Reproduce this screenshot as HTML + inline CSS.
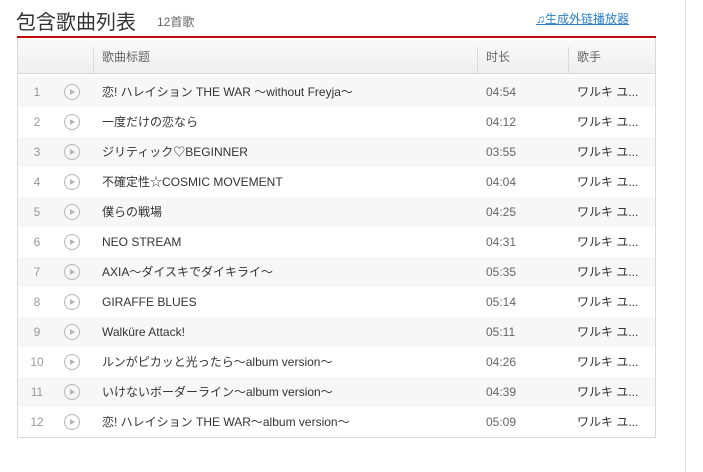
<!DOCTYPE html>
<html><head><meta charset="utf-8"><style>
body{margin:0;width:703px;height:472px;background:#fff;font-family:"Liberation Sans","Noto Sans CJK JP",sans-serif;position:relative;overflow:hidden}
.vline{position:absolute;left:685px;top:0;width:1px;height:472px;background:#e3e3e3}
.title{position:absolute;left:16px;top:6px;font-size:20px;color:#333}
.cnt{position:absolute;left:157px;top:13px;font-size:12px;color:#666}
.link{position:absolute;left:536px;top:10px;font-size:12px;color:#2a7fc6;text-decoration:underline}
.red{position:absolute;left:17px;top:36px;width:639px;height:2px;background:#c20c0c}
.tbl{position:absolute;left:17px;top:38px;width:637px;height:399px;border:1px solid #d9d9d9;border-top:none}
.hd{position:absolute;left:0;top:0;width:637px;height:35px;background:linear-gradient(#fafafa,#efefef);border-bottom:1px solid #d9d9d9;font-size:12px;color:#666;line-height:38px}
.hd span{position:absolute;top:0}
.sep{position:absolute;top:9px;width:1px;height:27px;background:#dadada}
.row{position:absolute;left:0;width:637px;height:30px;font-size:12px;color:#333;line-height:30px}
.row span{position:absolute;top:0;white-space:nowrap}
.row.o{background:#f7f7f7}
.row .n{left:0;width:38px;text-align:center;color:#999}
.row .p{left:46px;top:7px;width:14px;height:14px;border:1.5px solid #b5b5b5;border-radius:50%}
.row .p:after{content:"";position:absolute;left:5px;top:3.5px;border-left:5px solid #b5b5b5;border-top:3.5px solid transparent;border-bottom:3.5px solid transparent}
.row .t{left:84px}
.row .d{left:468px;color:#666}
.row .a{left:559px}
</style></head><body>
<div class="vline"></div>
<div class="title">包含歌曲列表</div>
<div class="cnt">12首歌</div>
<div class="link">♫生成外链播放器</div>
<div class="red"></div>
<div class="tbl">
<div class="hd"><span style="left:84px">歌曲标题</span><span style="left:468px">时长</span><span style="left:559px">歌手</span>
<div class="sep" style="left:75px"></div><div class="sep" style="left:459px"></div><div class="sep" style="left:550px"></div></div>
<div class="row o" style="top:39px"><span class="n">1</span><span class="p"></span><span class="t">恋! ハレイション THE WAR ～without Freyja～</span><span class="d">04:54</span><span class="a">ワルキ ユ...</span></div>
<div class="row" style="top:69px"><span class="n">2</span><span class="p"></span><span class="t">一度だけの恋なら</span><span class="d">04:12</span><span class="a">ワルキ ユ...</span></div>
<div class="row o" style="top:99px"><span class="n">3</span><span class="p"></span><span class="t">ジリティック♡BEGINNER</span><span class="d">03:55</span><span class="a">ワルキ ユ...</span></div>
<div class="row" style="top:129px"><span class="n">4</span><span class="p"></span><span class="t">不確定性☆COSMIC MOVEMENT</span><span class="d">04:04</span><span class="a">ワルキ ユ...</span></div>
<div class="row o" style="top:159px"><span class="n">5</span><span class="p"></span><span class="t">僕らの戦場</span><span class="d">04:25</span><span class="a">ワルキ ユ...</span></div>
<div class="row" style="top:189px"><span class="n">6</span><span class="p"></span><span class="t">NEO STREAM</span><span class="d">04:31</span><span class="a">ワルキ ユ...</span></div>
<div class="row o" style="top:219px"><span class="n">7</span><span class="p"></span><span class="t">AXIA～ダイスキでダイキライ～</span><span class="d">05:35</span><span class="a">ワルキ ユ...</span></div>
<div class="row" style="top:249px"><span class="n">8</span><span class="p"></span><span class="t">GIRAFFE BLUES</span><span class="d">05:14</span><span class="a">ワルキ ユ...</span></div>
<div class="row o" style="top:279px"><span class="n">9</span><span class="p"></span><span class="t">Walküre Attack!</span><span class="d">05:11</span><span class="a">ワルキ ユ...</span></div>
<div class="row" style="top:309px"><span class="n">10</span><span class="p"></span><span class="t">ルンがピカッと光ったら～album version～</span><span class="d">04:26</span><span class="a">ワルキ ユ...</span></div>
<div class="row o" style="top:339px"><span class="n">11</span><span class="p"></span><span class="t">いけないボーダーライン～album version～</span><span class="d">04:39</span><span class="a">ワルキ ユ...</span></div>
<div class="row" style="top:369px"><span class="n">12</span><span class="p"></span><span class="t">恋! ハレイション THE WAR～album version～</span><span class="d">05:09</span><span class="a">ワルキ ユ...</span></div>
</div>
</body></html>
